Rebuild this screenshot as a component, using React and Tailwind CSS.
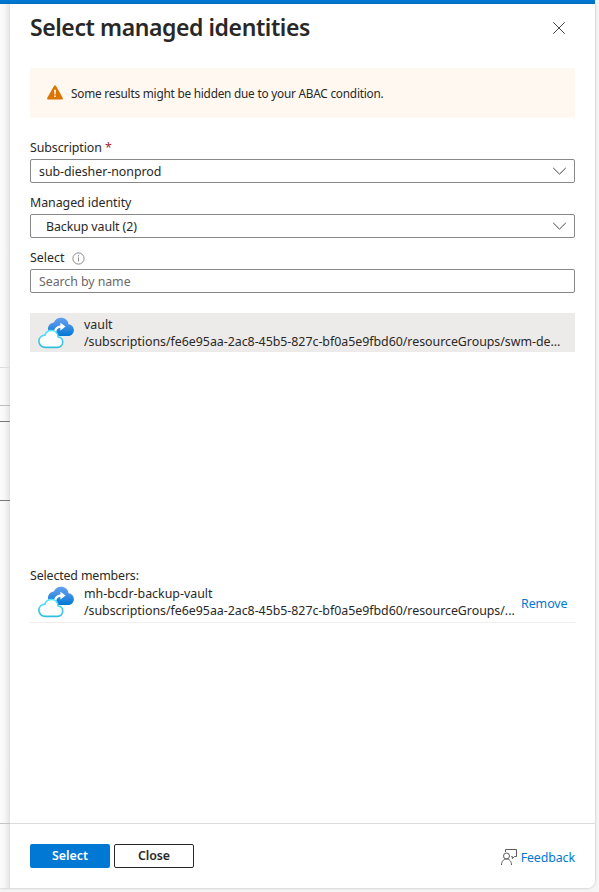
import React from "react";

function VaultIcon({ id }) {
  return (
    <svg className="block h-9 w-9 shrink-0" viewBox="0 0 36 36" fill="none">
      <defs>
        <linearGradient id={id + "-back"} x1="0" y1="0" x2="0" y2="1">
          <stop offset="0" stopColor="#5EA0EF" />
          <stop offset="0.35" stopColor="#4a93e8" />
          <stop offset="1" stopColor="#0078D4" />
        </linearGradient>
        <linearGradient id={id + "-front"} x1="0" y1="0" x2="0" y2="1">
          <stop offset="0" stopColor="#50E6FF" />
          <stop offset="1" stopColor="#32BEDD" />
        </linearGradient>
      </defs>
      <path
        d="M35.900 15c-.1-3.100-2.400-5.500-5.400-5.800C30.100 5.200 26.900 2.700 23 2.700c-3.200 0-6 1.900-7.100 4.700-3.500.5-5.900 3-5.900 6.200 0 3.900 3 7.400 7 7.400h13c3.500 0 5.900-2.700 5.900-6z"
        fill={`url(#${id}-back)`}
      />
      <path
        d="M15.900 18c-.2-4.100 2.100-7.300 6.500-7.600V7.700l5.200 3.900-5.200 3.900v-2.800c-2.700.1-4.100 1.900-4.300 5.300z"
        fill="#fff"
      />
      <path
        d="M25.100 27.500c0-2.700-1.900-4.800-4.500-5.100-.3-3.900-3.200-6.500-6.900-6.500-3.100 0-5.500 1.900-6.500 4.700-3.400.3-5.900 2.900-5.900 6 0 3.500 2.800 6.200 6.500 6.200h12c3 0 5.300-2.300 5.300-5.300z"
        transform="translate(-.4 -.4)"
        fill="#fff"
        stroke={`url(#${id}-front)`}
        strokeWidth="1.7"
      />
    </svg>
  );
}

function Chevron() {
  return (
    <svg className="h-[8px] w-[14px] shrink-0" viewBox="0 0 14 8" fill="none" stroke="#484644" strokeWidth="1">
      <path d="M1.200 .9 7.500 7.100 13.800 .9" />
    </svg>
  );
}

function Label({ children }) {
  return <div className="flex h-[31px] items-end pb-[2px] leading-[18px]">{children}</div>;
}

function Field({ children }) {
  return (
    <div className="flex h-6 items-center justify-between rounded-[2px] border border-[#8a8886] pr-2 pl-2">
      {children}
    </div>
  );
}

export default function App() {
  return (
    <div className="h-[892px] w-[599px] overflow-hidden bg-[#f5f5f5] font-['Noto_Sans','Open_Sans',sans-serif] text-[12.4px] text-[#292827]">
      <div className="h-1 w-[595px] bg-[#0078d4]" />
      <div className="flex h-[884px] w-[595px] overflow-hidden rounded-br-[8px] bg-white shadow-[0_0_3px_rgba(0,0,0,0.25)]">
        <div className="flex w-[10px] shrink-0 flex-col bg-gradient-to-r from-[#fcfcfc] via-[#f6f6f6] to-[#e2e2e2]">
          <div className="h-[364px] border-b border-[#dcdcdc]" />
          <div className="h-[38px] border-b border-[#bdbdbd]" />
          <div className="h-[16px] border-b border-[#797775]" />
          <div className="h-[79px] border-b border-[#797775]" />
          <div className="h-[323px] border-b border-[#c4c4c4]" />
        </div>
        <div className="flex w-[585px] flex-col bg-white">
          <div className="flex h-[820px] flex-col border-b border-[#dcdcdc] px-5">
            <header className="flex h-16 shrink-0 items-start justify-between pr-[10px]">
              <h1 className="mt-[7px] text-[23px] leading-8 font-semibold tracking-[-0.42px] whitespace-nowrap">
                Select managed identities
              </h1>
              <svg className="mt-[18px] h-3 w-3" viewBox="0 0 12 12" stroke="#484644" strokeWidth="1">
                <path d="M.3 .3 11.700 11.700M11.700 .3 .3 11.700" />
              </svg>
            </header>

            <div className="flex h-[50px] shrink-0 items-center rounded-[2px] bg-[#fff8f1] pl-[17px]">
              <svg className="mr-2 mb-[2px] h-[15px] w-4" viewBox="0 0 16 15">
                <path d="M7 .9a1.200 1.200 0 0 1 2 0l6.700 11.800a1.200 1.200 0 0 1-1 1.800H1.300a1.200 1.200 0 0 1-1-1.800z" fill="#db7500" />
                <path d="M7.100 4.800h1.800l-.3 4.700H7.400zM7.200 10.500h1.600v1.600H7.200z" fill="#fff" />
              </svg>
              <span className="pt-[2px] text-[11.8px] tracking-[-0.22px]">
                Some results might be hidden due to your ABAC condition.
              </span>
            </div>

            <div className="h-[10px] shrink-0" />
            <Label>
              <span className="tracking-[-0.07px]">Subscription</span>
              <span className="ml-[3px] text-[#a4262c]">*</span>
            </Label>
            <Field>
              <span className="pt-[2px] tracking-[-0.04px]">sub-diesher-nonprod</span>
              <Chevron />
            </Field>
            <Label>
              <span className="tracking-[-0.05px]">Managed identity</span>
            </Label>
            <Field>
              <span className="pt-[2px] pl-[7px] tracking-[-0.1px]">Backup vault (2)</span>
              <Chevron />
            </Field>
            <Label>
              <span>Select</span>
              <svg className="mb-[2px] ml-2 h-[13px] w-[13px]" viewBox="0 0 13 13" fill="none" stroke="#8a8886">
                <circle cx="6.500" cy="6.500" r="5.600" />
                <path d="M6.500 5.500v4M6.500 3.300v1.200" />
              </svg>
            </Label>
            <Field>
              <span className="pt-[2px] tracking-[-0.07px] text-[#6b6967]">Search by name</span>
            </Field>

            <div className="mt-5 flex h-[39px] shrink-0 items-center bg-[#edebe9] pl-2">
              <VaultIcon id="result" />
              <div className="ml-[10px] leading-[17px] whitespace-nowrap">
                <div>vault</div>
                <div className="tracking-[-0.03px]">
                  /subscriptions/fe6e95aa-2ac8-45b5-827c-bf0a5e9fbd60/resourceGroups/swm-de...
                </div>
              </div>
            </div>

            <div className="mt-[215px] h-[17px] leading-[18px] tracking-[-0.15px]">Selected members:</div>
            <div className="flex h-[39px] shrink-0 items-center border-b border-[#f0efee] pb-[2px] pl-2">
              <VaultIcon id="member" />
              <div className="ml-[10px] w-[437px] shrink-0 leading-[17px] whitespace-nowrap">
                <div>mh-bcdr-backup-vault</div>
                <div className="tracking-[-0.03px]">
                  /subscriptions/fe6e95aa-2ac8-45b5-827c-bf0a5e9fbd60/resourceGroups/...
                </div>
              </div>
              <span className="pt-[5px] tracking-[-0.05px] text-[#0078d4]">Remove</span>
            </div>
          </div>

          <footer className="flex h-16 items-center gap-1 px-5">
            <button className="h-6 w-20 rounded-[2px] bg-[#0078d4] leading-[22px] font-semibold tracking-[-0.05px] text-white">
              Select
            </button>
            <button className="h-6 w-20 rounded-[2px] border border-[#292827] leading-[20px] font-semibold tracking-[-0.1px]">
              Close
            </button>
            <div className="ml-auto flex items-center gap-1 pt-[1px] text-[#0078d4]">
              <svg className="h-4 w-4" viewBox="0 0 16 16" fill="none" stroke="#5c5a58" strokeWidth="1">
                <path d="M4.500 3V.5h11v7h-2l-2.200 2.200V7.500h-1" />
                <circle cx="5.500" cy="7" r="3" />
                <path d="M.5 16c0-3.500 2-6 5-6s5 2.500 5 6" />
              </svg>
              <span className="pt-[2px] leading-[18px] tracking-[-0.1px]">Feedback</span>
            </div>
          </footer>
        </div>
      </div>
    </div>
  );
}
